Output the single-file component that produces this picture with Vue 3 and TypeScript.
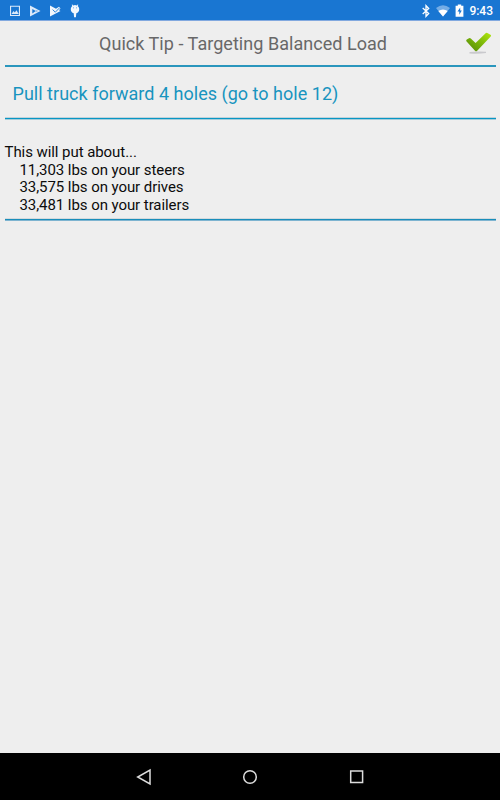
<script setup lang="ts">
interface AxleLoad {
  weight: string
  axle: string
}

const title = 'Quick Tip - Targeting Balanced Load'
const tip = 'Pull truck forward 4 holes (go to hole 12)'
const time = '9:43'
const loads: AxleLoad[] = [
  { weight: '11,303', axle: 'steers' },
  { weight: '33,575', axle: 'drives' },
  { weight: '33,481', axle: 'trailers' },
]
</script>

<template>
  <div class="screen">
    <header class="status">
      <div class="notifications">
        <svg width="12" height="12" viewBox="0 0 12 12">
          <path fill="#dceafa" fill-rule="evenodd" d="M1 .7h10v10.300H1ZM2.100 1.800v8.100h7.800V1.800ZM2.500 9l2-3 1.300 1.500L7.500 5.200l2.200 3.800Z" />
        </svg>
        <svg width="12" height="12" viewBox="0 0 12 12">
          <path fill="#dceafa" d="M1 .5 11.500 6 1 11.500Z" />
          <path fill="#1976d2" d="M3.300 4 6.800 6 3.300 8.400Z" />
          <path fill="none" stroke="#6da8e4" stroke-width=".6" d="M6.800 6 9 4.700M6.800 6 9 7.400" />
        </svg>
        <svg width="12" height="12" viewBox="0 0 12 12">
          <path fill="#f2f7fd" d="M1 .5 7 3.700 10 1.800l1.500 1.600L10 5.200 11.500 6 1 11.500Z" />
          <path fill="none" stroke="#1976d2" stroke-width=".9" d="m3.600 4.600 2.700 2.600 4.200-4.300" />
        </svg>
        <svg width="12" height="14" viewBox="0 0 12 14">
          <path fill="#f2f7fd" d="M2.700.8 3.400.5l.9 1a4 4 0 0 1 3.400 0l.9-1 .7.300-.6 1.300c1 .8 1.500 2 1.500 3.200 0 2-1 3.600-2.900 4l-.4 3.900H5.100l-.4-3.900C2.800 8.900 1.800 7.300 1.800 5.300c0-1.200.5-2.400 1.500-3.200Z" />
          <path fill="#1976d2" d="M4 3.500h.8v.8H4ZM7.200 3.500H8v.8h-.8Z" />
        </svg>
      </div>
      <div class="system">
        <svg width="10" height="14" viewBox="0 0 10 14">
          <path fill="none" stroke="#fff" stroke-width="1.300" d="m1.700 4 6 5.500L5 12.300V1.700l2.700 2.800-6 5.500" />
        </svg>
        <svg width="14" height="12" viewBox="0 0 14 12">
          <path fill="#75ade6" d="M0 3Q7-2.300 14 3L7 11.500Z" />
          <path fill="#fff" d="M2.300 5.900Q7 2.900 11.700 5.900L7 11.500Z" />
        </svg>
        <svg width="9" height="13" viewBox="0 0 9 13">
          <path fill="#fff" d="M2.800.5h3.400v1.200h2.200v11H.6v-11h2.200Z" />
          <path fill="#1976d2" d="M5.200 3.400 2.500 7.500h1.800v3.200l2.500-4.200H5.200Z" />
        </svg>
        <span class="clock">{{ time }}</span>
      </div>
    </header>

    <main class="content">
      <section class="title-bar">
        <h1>{{ title }}</h1>
        <svg class="check" width="28" height="24" viewBox="0 0 28 24">
          <defs>
            <linearGradient id="leaf" x1="1" y1="0" x2=".2" y2=".8">
              <stop offset="0" stop-color="#b2e80c" />
              <stop offset=".55" stop-color="#80bb0a" />
              <stop offset="1" stop-color="#62980a" />
            </linearGradient>
          </defs>
          <path fill="#c9c9cd" d="M4.500 20q8-.8 16.500-.2v1.300q-8 .9-16.500.3Z" />
          <path fill="url(#leaf)" d="M1.400 9.200q-.6-1 .4-1.600l2.200-1.300q1-.5 1.800.3l4.800 4.300L20.600 1.300q.8-.8 1.700-.2l3.200 1.700q1.100.8.200 1.800L12.200 18.800q-1.200 1.100-2.200-.1Z" />
        </svg>
      </section>

      <section class="tip">{{ tip }}</section>

      <section class="result">
        <p>This will put about...</p>
        <ul>
          <li v-for="load in loads" :key="load.axle">{{ load.weight }} lbs on your {{ load.axle }}</li>
        </ul>
      </section>
    </main>

    <nav class="nav">
      <svg width="16" height="18" viewBox="0 0 16 18">
        <path fill="none" stroke="#ddd" stroke-width="1.500" d="M14 2v14L1.700 9Z" />
      </svg>
      <svg width="16" height="18" viewBox="0 0 16 18">
        <circle cx="8" cy="9" r="6.300" fill="none" stroke="#ddd" stroke-width="1.500" />
      </svg>
      <svg width="16" height="18" viewBox="0 0 16 18">
        <path fill="none" stroke="#ddd" stroke-width="1.500" d="M1.700 2.900h11.900v11.700H1.700Z" />
      </svg>
    </nav>
  </div>
</template>

<style>
body {
  margin: 0;
}
</style>

<style scoped>
.screen {
  display: flex;
  flex-direction: column;
  width: 500px;
  height: 800px;
  background: #eee;
  color: #0c0c0c;
  font-family: Roboto, sans-serif;
  overflow: hidden;
}
svg {
  display: block;
  flex: none;
}
.status {
  box-sizing: border-box;
  display: flex;
  justify-content: space-between;
  height: 21px;
  padding: 0 7px 0 9px;
  border-bottom: 1px solid #82a9df;
  background: #1976d2;
}
.notifications,
.system {
  display: flex;
  align-items: center;
  height: 21px;
}
.notifications {
  gap: 8px;
}
.system {
  gap: 5px;
}
.clock {
  color: #fff;
  font-size: 12px;
  font-weight: 500;
  line-height: 20px;
  padding-top: 1px;
}
.content {
  flex: 1;
  padding: 0 4px 0 4.500px;
}
.title-bar {
  box-sizing: border-box;
  display: flex;
  align-items: flex-start;
  justify-content: space-between;
  height: 46px;
  padding: 11px 3px 0 94.500px;
  border-bottom: 2px solid #2a96bd;
}
h1 {
  margin: 0;
  color: #686868;
  font-size: 18px;
  font-weight: 400;
  letter-spacing: 0.040px;
  line-height: 24px;
  white-space: nowrap;
}
.tip {
  box-sizing: border-box;
  height: 53px;
  padding-left: 8px;
  background: linear-gradient(#c3d2d9 0 1px, #0796c4 1px 2px, #a5cddb 2px 3px) bottom / 100% 3px no-repeat;
  color: #1894bf;
  font-size: 18px;
  letter-spacing: 0.020px;
  line-height: 53px;
  white-space: nowrap;
}
.result {
  box-sizing: border-box;
  height: 101px;
  padding-top: 24px;
  background: linear-gradient(#d4dadd 0 1px, #198dba 1px 2px, #7eb4d0 2px 3px) bottom / 100% 3px no-repeat;
  font-size: 15px;
  letter-spacing: -0.065px;
  line-height: 17.500px;
}
p,
ul {
  margin: 0;
  padding: 0;
  list-style: none;
}
ul {
  padding-left: 15px;
}
.nav {
  box-sizing: border-box;
  display: flex;
  justify-content: center;
  gap: 90.500px;
  height: 47px;
  padding-top: 15px;
  background: #000;
}
</style>
